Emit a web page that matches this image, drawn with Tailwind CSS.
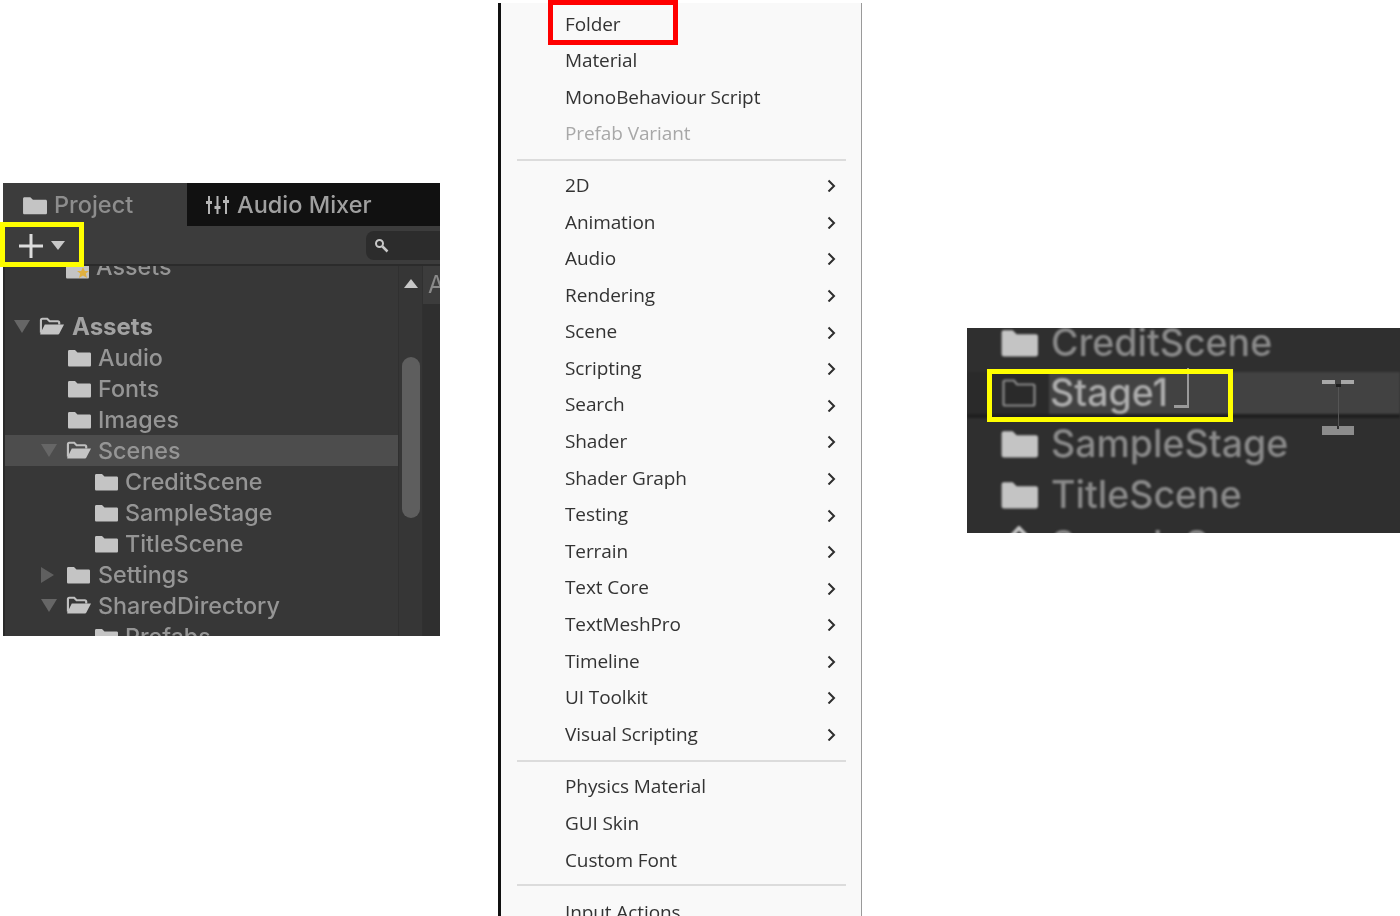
<!doctype html>
<html>
<head>
  <meta charset="utf-8">
  <title>Unity create folder</title>
  <script src="https://cdn.jsdelivr.net/npm/@tailwindcss/browser@4"></script>
</head>
<body class="w-[1400px] h-[916px] bg-white overflow-hidden relative font-['Inter',sans-serif]">
  <svg class="hidden">
    <symbol id="closed" viewBox="0 0 24 18"><path d="M1 2.500C1 1.500 1.500 1 2.500 1H8L10.500 3.500H22.500C23.500 3.500 24 4 24 5V16C24 17 23.500 17.500 22.500 17.500H2.500C1.500 17.500 1 17 1 16Z" fill="#c4c4c4"/></symbol>
    <symbol id="open" viewBox="0 0 27 19"><path d="M2 16V3C2 2 2.500 1.500 3.500 1.500H8.500L11 4H19.500C20.500 4 21 4.500 21 5.500V7.500" fill="none" stroke="#c0c0c0" stroke-width="2.200"/><path d="M1 17.500L6 7.500H26L21 17C20.800 17.500 20.300 17.800 19.800 17.800H2Z" fill="#c4c4c4"/></symbol>
    <symbol id="down" viewBox="0 0 16 13"><path d="M0 0H16L8 13Z" fill="#666666"/></symbol>
    <symbol id="right" viewBox="0 0 13 16"><path d="M0 0V16L13 8Z" fill="#5f5f5f"/></symbol>
    <symbol id="chev" viewBox="0 0 9 14"><path d="M1.500 2.500L7 8L1.500 13.500" fill="none" stroke="#2e2e2e" stroke-width="2"/></symbol>
  </svg>

  <!-- project window -->
  <div class="absolute left-[3px] top-[183px] w-[437px] h-[453px] flex flex-col overflow-hidden bg-[#373737] text-[#959595]">
    <div class="flex h-[43px] shrink-0 bg-[#111111] blur-[0.7px]">
      <div class="w-[184px] bg-[#3c3c3c] flex items-center pl-[19px] pt-[1px] gap-[7px] text-[23.500px] font-medium text-[#8d8d8d]">
        <svg class="w-[25px] h-[19px]"><use href="#closed"/></svg>Project
      </div>
      <div class="flex items-center pl-[18px] pt-[1px] gap-[7px] text-[23.500px] font-medium text-[#a0a0a0]">
        <svg class="w-[25px] h-[20px]" viewBox="0 0 25 20" fill="#b5b5b5"><path d="M3 1h2v5h2v3H5v10H3V9H1V6h2zM11.500 1h2v10h2v3h-2v5h-2v-5h-2v-3h2zM20 1h2v4h2v3h-2v11h-2V8h-2V5h2z"/></svg>Audio Mixer
      </div>
    </div>
    <div class="flex items-center justify-between h-[40px] shrink-0 pt-[1px] bg-[#3c3c3c] border-b-2 border-[#2b2b2b] blur-[0.6px]">
      <div class="flex items-center pl-[16px] gap-[8px]">
        <svg class="w-[24px] h-[24px]" viewBox="0 0 24 24"><path d="M12 0v24M0 12h24" stroke="#dcdcdc" stroke-width="3"/></svg>
        <svg class="w-[14px] h-[9px]" viewBox="0 0 14 9"><path d="M0 0H14L7 9Z" fill="#c8c8c8"/></svg>
      </div>
      <div class="w-[74px] h-[29px] bg-[#2c2c2c] rounded-l-[8px] flex items-center pl-[8px]">
        <svg class="w-[15px] h-[15px]" viewBox="0 0 15 15"><circle cx="5.500" cy="5.500" r="3.500" fill="none" stroke="#c8c8c8" stroke-width="2"/><path d="M8.500 8.500L13.500 13.500" stroke="#c8c8c8" stroke-width="2.500"/></svg>
      </div>
    </div>
    <div class="flex flex-1 min-h-0 overflow-hidden">
      <div class="w-[395px] shrink-0 border-l-2 border-[#2a2a2a] blur-[0.7px] overflow-hidden text-[23.300px] font-medium leading-[31px]">
        <div class="flex items-center h-[31px] pl-[60px] -mt-[15px] mb-[29px] gap-[7px]">
          <svg class="w-[24px] h-[26px]" viewBox="0 0 24 26"><path d="M1 10C1 9 1.500 8.500 2.500 8.500H8L10.500 11H22.500C23.500 11 24 11.500 24 12.500V23C24 24 23.500 24.500 22.500 24.500H2.500C1.500 24.500 1 24 1 23Z" fill="#c4c4c4"/><path d="M18 13L19.800 17H24L20.800 19.500L22 24L18 21.500L14 24L15.200 19.500L12 17H16.200Z" fill="#e0b040"/></svg>Assets
        </div>
        <div class="flex items-center h-[31px] pl-[9px] font-bold text-[24px] text-[#a2a2a2]">
          <span class="w-[25px]"><svg class="w-[16px] h-[13px]"><use href="#down"/></svg></span>
          <svg class="w-[26px] h-[19px] mr-[7px]"><use href="#open"/></svg>Assets
        </div>
        <div class="flex items-center h-[31px] pl-[62px]"><svg class="w-[24px] h-[18px] mr-[7px]"><use href="#closed"/></svg>Audio</div>
        <div class="flex items-center h-[31px] pl-[62px]"><svg class="w-[24px] h-[18px] mr-[7px]"><use href="#closed"/></svg>Fonts</div>
        <div class="flex items-center h-[31px] pl-[62px]"><svg class="w-[24px] h-[18px] mr-[7px]"><use href="#closed"/></svg>Images</div>
        <div class="flex items-center h-[31px] pl-[36px] bg-[#4d4d4d]">
          <span class="w-[25px]"><svg class="w-[16px] h-[13px]"><use href="#down"/></svg></span>
          <svg class="w-[26px] h-[19px] mr-[6px]"><use href="#open"/></svg>Scenes
        </div>
        <div class="flex items-center h-[31px] pl-[89px]"><svg class="w-[24px] h-[18px] mr-[7px]"><use href="#closed"/></svg>CreditScene</div>
        <div class="flex items-center h-[31px] pl-[89px]"><svg class="w-[24px] h-[18px] mr-[7px]"><use href="#closed"/></svg>SampleStage</div>
        <div class="flex items-center h-[31px] pl-[89px]"><svg class="w-[24px] h-[18px] mr-[7px]"><use href="#closed"/></svg>TitleScene</div>
        <div class="flex items-center h-[31px] pl-[36px]">
          <span class="w-[25px]"><svg class="w-[13px] h-[16px]"><use href="#right"/></svg></span>
          <svg class="w-[24px] h-[18px] mr-[8px]"><use href="#closed"/></svg>Settings
        </div>
        <div class="flex items-center h-[31px] pl-[36px]">
          <span class="w-[25px]"><svg class="w-[16px] h-[13px]"><use href="#down"/></svg></span>
          <svg class="w-[26px] h-[19px] mr-[6px]"><use href="#open"/></svg>SharedDirectory
        </div>
        <div class="flex items-center h-[31px] pl-[89px]"><svg class="w-[24px] h-[18px] mr-[7px]"><use href="#closed"/></svg>Prefabs</div>
      </div>
      <div class="w-[25px] shrink-0 bg-[#363636] flex flex-col items-center pt-[13px] border-x border-[#303030] blur-[0.5px]">
        <svg class="w-[14px] h-[9px]" viewBox="0 0 14 9"><path d="M0 9H14L7 0Z" fill="#c8c8c8"/></svg>
        <div class="w-[18px] h-[161px] mt-[69px] rounded-full bg-[#5e5e5e]"></div>
      </div>
      <div class="flex-1 bg-[#2f2f2f]">
        <div class="h-[38px] bg-[#3c3c3c] text-[24px] leading-[38px] pl-[5px] text-[#8a8a8a] blur-[0.7px]">A</div>
      </div>
    </div>
  </div>
  <div class="absolute left-0 top-[222px] w-[84px] h-[45px] border-[5px] border-[#ffff00]"></div>

  <!-- create menu -->
  <div class="absolute left-[498px] top-[3px] w-[364px] h-[913px] overflow-hidden bg-[#f9f9f9] border-l-[3px] border-l-[#111111] border-r border-r-[#9a9a9a] font-['Open_Sans',sans-serif] text-[19px] tracking-[-0.1px] text-[#333333] blur-[0.5px] pt-[2.500px]">
    <div class="h-[36.600px] leading-[36.600px] pl-[64px]">Folder</div>
    <div class="h-[36.600px] leading-[36.600px] pl-[64px]">Material</div>
    <div class="h-[36.600px] leading-[36.600px] pl-[64px]">MonoBehaviour Script</div>
    <div class="h-[36.600px] leading-[36.600px] pl-[64px] text-[#a8a8a8]">Prefab Variant</div>
    <div class="h-[2px] bg-[#dcdcdc] ml-[16px] mr-[15px] mt-[7.500px] mb-[5.500px]"></div>
    <div class="flex items-center justify-between h-[36.600px] pl-[64px] pr-[25px]">2D<svg class="w-[9px] h-[14px]"><use href="#chev"/></svg></div>
    <div class="flex items-center justify-between h-[36.600px] pl-[64px] pr-[25px]">Animation<svg class="w-[9px] h-[14px]"><use href="#chev"/></svg></div>
    <div class="flex items-center justify-between h-[36.600px] pl-[64px] pr-[25px]">Audio<svg class="w-[9px] h-[14px]"><use href="#chev"/></svg></div>
    <div class="flex items-center justify-between h-[36.600px] pl-[64px] pr-[25px]">Rendering<svg class="w-[9px] h-[14px]"><use href="#chev"/></svg></div>
    <div class="flex items-center justify-between h-[36.600px] pl-[64px] pr-[25px]">Scene<svg class="w-[9px] h-[14px]"><use href="#chev"/></svg></div>
    <div class="flex items-center justify-between h-[36.600px] pl-[64px] pr-[25px]">Scripting<svg class="w-[9px] h-[14px]"><use href="#chev"/></svg></div>
    <div class="flex items-center justify-between h-[36.600px] pl-[64px] pr-[25px]">Search<svg class="w-[9px] h-[14px]"><use href="#chev"/></svg></div>
    <div class="flex items-center justify-between h-[36.600px] pl-[64px] pr-[25px]">Shader<svg class="w-[9px] h-[14px]"><use href="#chev"/></svg></div>
    <div class="flex items-center justify-between h-[36.600px] pl-[64px] pr-[25px]">Shader Graph<svg class="w-[9px] h-[14px]"><use href="#chev"/></svg></div>
    <div class="flex items-center justify-between h-[36.600px] pl-[64px] pr-[25px]">Testing<svg class="w-[9px] h-[14px]"><use href="#chev"/></svg></div>
    <div class="flex items-center justify-between h-[36.600px] pl-[64px] pr-[25px]">Terrain<svg class="w-[9px] h-[14px]"><use href="#chev"/></svg></div>
    <div class="flex items-center justify-between h-[36.600px] pl-[64px] pr-[25px]">Text Core<svg class="w-[9px] h-[14px]"><use href="#chev"/></svg></div>
    <div class="flex items-center justify-between h-[36.600px] pl-[64px] pr-[25px]">TextMeshPro<svg class="w-[9px] h-[14px]"><use href="#chev"/></svg></div>
    <div class="flex items-center justify-between h-[36.600px] pl-[64px] pr-[25px]">Timeline<svg class="w-[9px] h-[14px]"><use href="#chev"/></svg></div>
    <div class="flex items-center justify-between h-[36.600px] pl-[64px] pr-[25px]">UI Toolkit<svg class="w-[9px] h-[14px]"><use href="#chev"/></svg></div>
    <div class="flex items-center justify-between h-[36.600px] pl-[64px] pr-[25px]">Visual Scripting<svg class="w-[9px] h-[14px]"><use href="#chev"/></svg></div>
    <div class="h-[2px] bg-[#dcdcdc] ml-[16px] mr-[15px] mt-[7.500px] mb-[6.500px]"></div>
    <div class="h-[36.600px] leading-[36.600px] pl-[64px]">Physics Material</div>
    <div class="h-[36.600px] leading-[36.600px] pl-[64px]">GUI Skin</div>
    <div class="h-[36.600px] leading-[36.600px] pl-[64px]">Custom Font</div>
    <div class="h-[2px] bg-[#dcdcdc] ml-[16px] mr-[15px] mt-[6px] mb-[8px]"></div>
    <div class="h-[36.600px] leading-[36.600px] pl-[64px]">Input Actions</div>
  </div>
  <div class="absolute left-[548px] top-0 w-[130px] h-[45px] border-[5px] border-[#ff0000]"></div>

  <!-- rename crop -->
  <div class="absolute left-[967px] top-[328px] w-[433px] h-[205px] overflow-hidden bg-[#2f2f2f] text-[37.500px] font-medium text-[#8a8a8a]">
    <div class="blur-[1px]">
      <div class="flex items-center h-[50px] -mt-[10px] pl-[33px] gap-[13px]"><svg class="w-[38px] h-[30px]"><use href="#closed"/></svg>CreditScene</div>
      <div class="flex items-center h-[46px] mt-[4px] pl-[35px] border-b-4 border-[#1f1f1f] bg-[linear-gradient(to_right,#2a2a2a_0,#2a2a2a_82px,#424242_82px)] text-[#adadad] leading-[38px]">
        <svg class="w-[34px] h-[28px] mr-[14px]" viewBox="0 0 34 28"><path d="M1.500 25V3C1.500 2 2 1.500 3 1.500H12L15 5.500H31C32 5.500 32.500 6 32.500 7V25C32.500 26 32 26.500 31 26.500H3C2 26.500 1.500 26 1.500 25Z" fill="none" stroke="#8a8a8a" stroke-width="2.200"/></svg>
        <span class="-mt-[1px]">Stage1</span>
      </div>
      <div class="flex items-center h-[50px] mt-[1px] pl-[33px] gap-[13px]"><svg class="w-[38px] h-[30px]"><use href="#closed"/></svg>SampleStage</div>
      <div class="flex items-center h-[50px] mt-[1px] pl-[33px] gap-[13px]"><svg class="w-[38px] h-[30px]"><use href="#closed"/></svg>TitleScene</div>
      <div class="flex items-center h-[50px] pl-[33px] gap-[13px]">
        <svg class="w-[38px] h-[38px]" viewBox="0 0 38 38"><path d="M19 2L35 19L19 36L3 19Z" fill="none" stroke="#c4c4c4" stroke-width="4"/></svg>SampleScene
      </div>
    </div>
    <!-- caret and glitchy drag marker lie over the row -->
    <div class="absolute left-[207px] top-[40px] w-[15px] h-[40px] border-r-2 border-b-[3px] border-[#9a9a9a] blur-[0.6px]"></div>
    <div class="absolute left-[355px] top-[52px] w-[32px] h-[55px] flex flex-col blur-[0.7px]">
      <div class="flex justify-between h-[4px]">
        <div class="w-[13px] bg-[#a8a8a8]"></div>
        <div class="w-[13px] bg-[#a8a8a8]"></div>
      </div>
      <div class="w-[5px] h-[3px] mx-auto bg-[#1f1f1f]"></div>
      <div class="w-[1px] flex-1 mx-auto bg-[#555555]"></div>
      <div class="h-[9px] bg-[#8c8c8c]">
        <div class="w-[2px] h-[3px] mx-auto bg-[#2f2f2f]"></div>
      </div>
    </div>
  </div>
  <div class="absolute left-[987px] top-[369px] w-[246px] h-[53px] border-[5px] border-[#ffff00]"></div>
</body>
</html>
